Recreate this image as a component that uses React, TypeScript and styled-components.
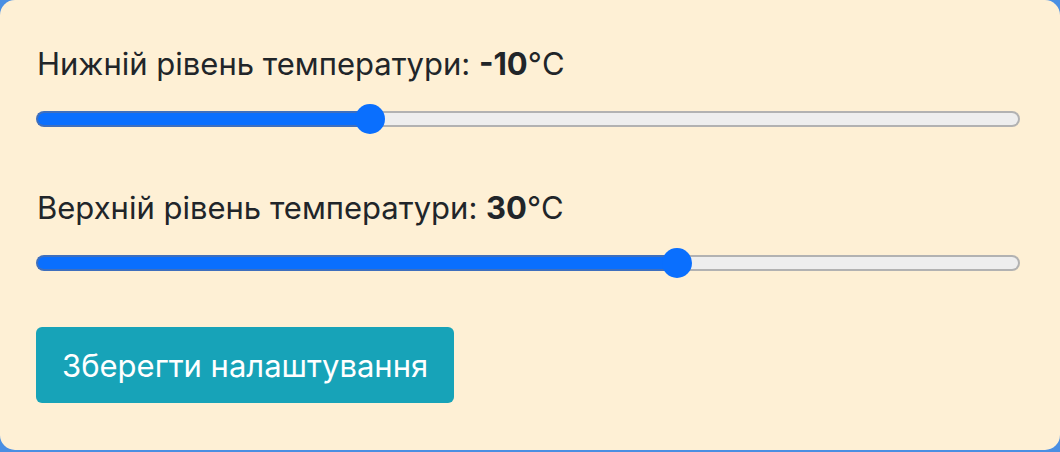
import React from "react";
import styled, { createGlobalStyle } from "styled-components";

const Global = createGlobalStyle`
  html, body { margin: 0; padding: 0; }
  body {
    background: #4a8fe3;
    font-family: Inter, "Noto Sans", Roboto, sans-serif;
    color: #212529;
    overflow: hidden;
  }
`;

const Card = styled.div`
  box-sizing: border-box;
  width: 1060px;
  height: 450px;
  background: #fef0d5;
  border-radius: 15px;
  padding: 46px 40px 0 36px;
  display: flex;
  flex-direction: column;
  align-items: stretch;
`;

const Group = styled.div`
  display: flex;
  flex-direction: column;
  gap: 22px;
  margin-bottom: 56px;
  &:last-of-type { margin-bottom: 49px; }
`;

const Label = styled.div`
  font-size: 31px;
  line-height: 36px;
  padding-left: 1px;
  white-space: nowrap;
`;

const Value = styled.b`
  font-weight: 700;
`;

const SliderWrap = styled.div`
  position: relative;
  height: 30px;
  display: flex;
  align-items: center;
`;

const Track = styled.div`
  flex: 1;
  display: flex;
  height: 16px;
`;

const Fill = styled.div`
  box-sizing: border-box;
  height: 100%;
  background: #0a6ffe;
  border: 2px solid #3f6fbd;
  border-right: none;
  border-radius: 8px 0 0 8px;
`;

const Rest = styled.div`
  box-sizing: border-box;
  flex: 1;
  height: 100%;
  background: #eeeeee;
  border: 2px solid #b2b2b2;
  border-left: none;
  border-radius: 0 8px 8px 0;
`;

const Thumb = styled.div`
  position: absolute;
  top: 0;
  width: 30px;
  height: 30px;
  margin-left: -15px;
  border-radius: 50%;
  background: #0a6ffe;
`;

const Button = styled.button`
  align-self: flex-start;
  height: 76px;
  padding: 0 26px;
  border: none;
  border-radius: 6px;
  background: #17a3b8;
  color: #ffffff;
  font-family: inherit;
  font-size: 31px;
  cursor: pointer;
`;

const MIN = -51.6;
const MAX = 72.7;

function Slider({ value }: { value: number }) {
  const width = 984;
  const travel = width - 30;
  const x = 15 + ((value - MIN) / (MAX - MIN)) * travel;
  return (
    <SliderWrap>
      <Track>
        <Fill style={{ width: x }} />
        <Rest />
      </Track>
      <Thumb style={{ left: x }} />
    </SliderWrap>
  );
}

export default function App() {
  return (
    <>
      <Global />
      <Card>
        <Group>
          <Label>
            Нижній рівень температури: <Value>-10</Value>°C
          </Label>
          <Slider value={-10} />
        </Group>
        <Group>
          <Label>
            Верхній рівень температури: <Value>30</Value>°C
          </Label>
          <Slider value={30} />
        </Group>
        <Button>Зберегти налаштування</Button>
      </Card>
    </>
  );
}
